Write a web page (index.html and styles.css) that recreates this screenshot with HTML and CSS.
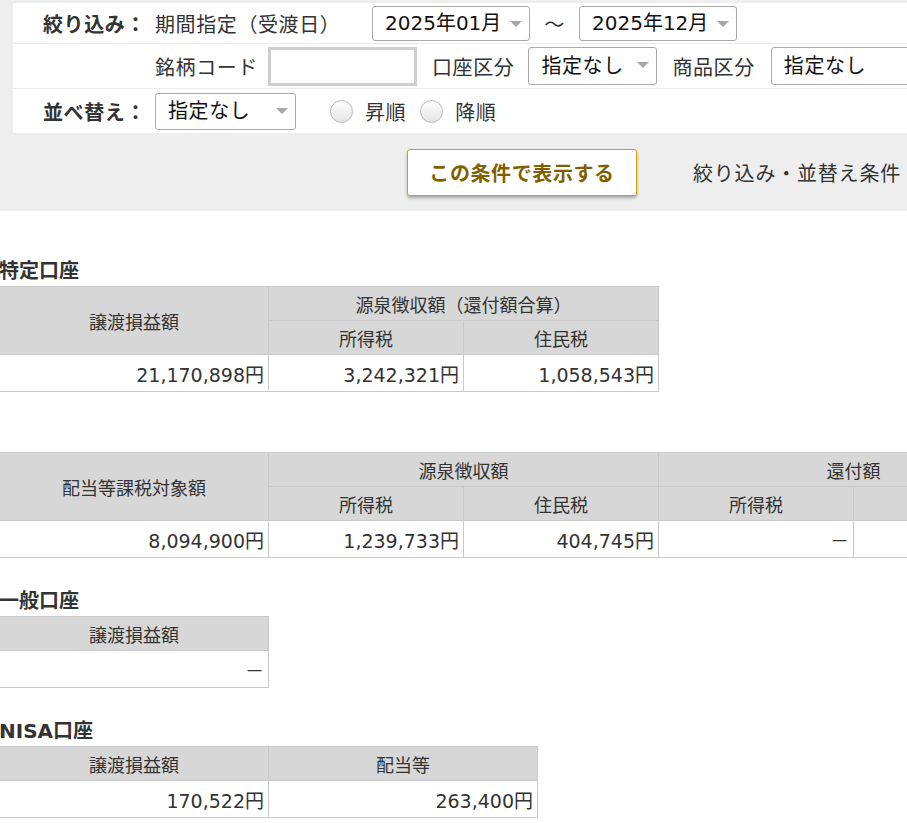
FILE: index.html
```html
<!DOCTYPE html>
<html lang="ja">
<head>
    <meta charset="UTF-8">
    <meta name="viewport" content="width=device-width, initial-scale=1.0">
    <title>譲渡益・配当等</title>
    <link rel="stylesheet" href="styles.css">
</head>
<body>
    <form class="search-panel" action="#">
        <div class="search-box">
            <div class="search-row">
                <span class="row-label">絞り込み：</span>
                <span class="field-label period">期間指定（受渡日）</span>
                <span class="select-wrap month">
                    <select><option>2025年01月</option></select>
                    <svg class="arrow" width="12" height="6" viewBox="0 0 12 6"><path d="M0 0h12L6 6z" fill="#a6a6a6"/></svg>
                </span>
                <span class="tilde">～</span>
                <span class="select-wrap month">
                    <select><option>2025年12月</option></select>
                    <svg class="arrow" width="12" height="6" viewBox="0 0 12 6"><path d="M0 0h12L6 6z" fill="#a6a6a6"/></svg>
                </span>
            </div>
            <div class="search-row">
                <span class="row-label"></span>
                <span class="field-label">銘柄コード</span>
                <input class="code-input" type="text">
                <span class="field-label gap-left">口座区分</span>
                <span class="select-wrap account">
                    <select><option>指定なし</option></select>
                    <svg class="arrow" width="12" height="6" viewBox="0 0 12 6"><path d="M0 0h12L6 6z" fill="#a6a6a6"/></svg>
                </span>
                <span class="field-label gap-left">商品区分</span>
                <span class="select-wrap product">
                    <select><option>指定なし</option></select>
                    <svg class="arrow" width="12" height="6" viewBox="0 0 12 6"><path d="M0 0h12L6 6z" fill="#a6a6a6"/></svg>
                </span>
            </div>
            <div class="search-row">
                <span class="row-label">並べ替え：</span>
                <span class="select-wrap sort">
                    <select><option>指定なし</option></select>
                    <svg class="arrow" width="12" height="6" viewBox="0 0 12 6"><path d="M0 0h12L6 6z" fill="#a6a6a6"/></svg>
                </span>
                <label class="radio first"><input type="radio" name="order">昇順</label>
                <label class="radio"><input type="radio" name="order">降順</label>
            </div>
        </div>
        <div class="search-actions">
            <button class="submit-btn" type="submit">この条件で表示する</button>
            <a class="clear-link" href="#">絞り込み・並替え条件</a>
        </div>
    </form>

    <div class="results">
        <section class="account-block first">
            <h2 class="account-title">特定口座</h2>
            <table class="result-table">
                <colgroup><col class="c-main"><col class="c-sub"><col class="c-sub"></colgroup>
                <tr><th rowspan="2">譲渡損益額</th><th colspan="2">源泉徴収額（還付額合算）</th></tr>
                <tr><th>所得税</th><th>住民税</th></tr>
                <tr><td>21,170,898円</td><td>3,242,321円</td><td>1,058,543円</td></tr>
            </table>
        </section>

        <section class="account-block">
            <div class="account-title spacer"></div>
            <table class="result-table">
                <colgroup><col class="c-main"><col class="c-sub"><col class="c-sub"><col class="c-sub"><col class="c-sub"></colgroup>
                <tr><th rowspan="2">配当等課税対象額</th><th colspan="2">源泉徴収額</th><th colspan="2">還付額</th></tr>
                <tr><th>所得税</th><th>住民税</th><th>所得税</th><th></th></tr>
                <tr><td>8,094,900円</td><td>1,239,733円</td><td>404,745円</td><td>－</td><td></td></tr>
            </table>
        </section>

        <section class="account-block">
            <h2 class="account-title">一般口座</h2>
            <table class="result-table">
                <colgroup><col class="c-main"></colgroup>
                <tr><th>譲渡損益額</th></tr>
                <tr><td>－</td></tr>
            </table>
        </section>

        <section class="account-block">
            <h2 class="account-title">NISA口座</h2>
            <table class="result-table">
                <colgroup><col class="c-main"><col class="c-main"></colgroup>
                <tr><th>譲渡損益額</th><th>配当等</th></tr>
                <tr><td>170,522円</td><td>263,400円</td></tr>
            </table>
        </section>
    </div>
</body>
</html>
```

FILE: styles.css
```css
*{
    margin: 0;
    padding: 0;
    box-sizing: border-box;
}
html, body{
    overflow-x: hidden;
}
body{
    font-family: "DejaVu Sans", "Noto Sans CJK JP", sans-serif;
    color: #333;
    background: #fff;
    width: 1100px;
}

/* search panel */
.search-panel{
    background: #eeeeee;
    padding: 3px 0 0 13px;
    height: 211px;
}
.search-box{
    background: #fff;
}
.search-row{
    display: flex;
    align-items: center;
    height: 45px;
    border-bottom: 1px solid #ebebeb;
    font-size: 20px;
    letter-spacing: 0.6px;
    white-space: nowrap;
}
.search-row:first-child{
    height: 41px;
}
.search-row:last-child{
    border-bottom: none;
    height: 44px;
}
.row-label{
    width: 142px;
    padding-right: 9px;
    text-align: right;
    font-weight: bold;
    flex-shrink: 0;
}
.field-label{
    color: #333;
}
.field-label.period{
    width: 217px;
}
.field-label.gap-left{
    margin-left: 15px;
}
.select-wrap{
    position: relative;
    display: inline-block;
    flex-shrink: 0;
}
.select-wrap select{
    appearance: none;
    -webkit-appearance: none;
    font: inherit;
    letter-spacing: inherit;
    color: #111;
    background: #fff;
    border: 1px solid #a9a9a9;
    border-radius: 3px;
    height: 35px;
    padding: 0 14px 0 12px;
    width: 100%;
}
.select-wrap.month select{
    letter-spacing: 0;
}
.select-wrap .arrow{
    position: absolute;
    right: 8px;
    top: 15px;
    pointer-events: none;
}
.select-wrap.month{
    width: 158px;
}
.select-wrap.account{
    width: 129px;
    margin-left: 14px;
}
.select-wrap.account select,
.select-wrap.product select{
    height: 38px;
}
.select-wrap.product{
    width: 170px;
    margin-left: 16px;
}
.select-wrap.sort{
    width: 141px;
}
.select-wrap.sort select{
    height: 37px;
}
.tilde{
    width: 49px;
    text-align: center;
    color: #333;
}
.code-input{
    width: 149px;
    height: 39px;
    margin-left: 10px;
    border: 3px solid #cfcfcf;
    font: inherit;
    outline: none;
}
.radio{
    display: inline-flex;
    align-items: center;
    gap: 12px;
    margin-left: 14px;
}
.radio.first{
    margin-left: 34px;
}
.radio input{
    appearance: none;
    -webkit-appearance: none;
    width: 23px;
    height: 23px;
    border-radius: 50%;
    border: 1px solid #b9b9b9;
    background: linear-gradient(#ffffff, #e4e4e4);
}

.search-actions{
    display: flex;
    align-items: center;
    padding: 16px 0 0 394px;
    white-space: nowrap;
}
.submit-btn{
    width: 230px;
    height: 47px;
    background: #fff;
    border: 1px solid #d4a500;
    border-radius: 3px;
    box-shadow: 0 2px 3px rgba(0, 0, 0, 0.3);
    color: #7f6100;
    font-family: inherit;
    font-size: 20px;
    letter-spacing: 0.6px;
    font-weight: bold;
    cursor: pointer;
}
.clear-link{
    margin-left: 56px;
    font-size: 20px;
    letter-spacing: 0.8px;
    color: #333;
    text-decoration: none;
}

/* result tables */
.results{
    margin-left: -1px;
}
.account-block{
    margin-top: 30px;
}
.account-block.first{
    margin-top: 47px;
}
.account-title{
    height: 28px;
    font-size: 20px;
    font-weight: bold;
    line-height: 26px;
    color: #333;
}
.account-title.spacer{
    height: 30px;
}
.result-table{
    border-collapse: collapse;
    table-layout: fixed;
    font-size: 18px;
}
.result-table .c-main{
    width: 269px;
}
.result-table .c-sub{
    width: 195px;
}
.result-table th{
    background: #d7d7d7;
    border: 1px solid #c9c9c9;
    font-weight: normal;
    height: 34px;
    color: #333;
}
.result-table td{
    border: 1px solid #c9c9c9;
    height: 37px;
    text-align: right;
    padding-right: 4px;
    font-size: 19px;
    color: #333;
}
```
